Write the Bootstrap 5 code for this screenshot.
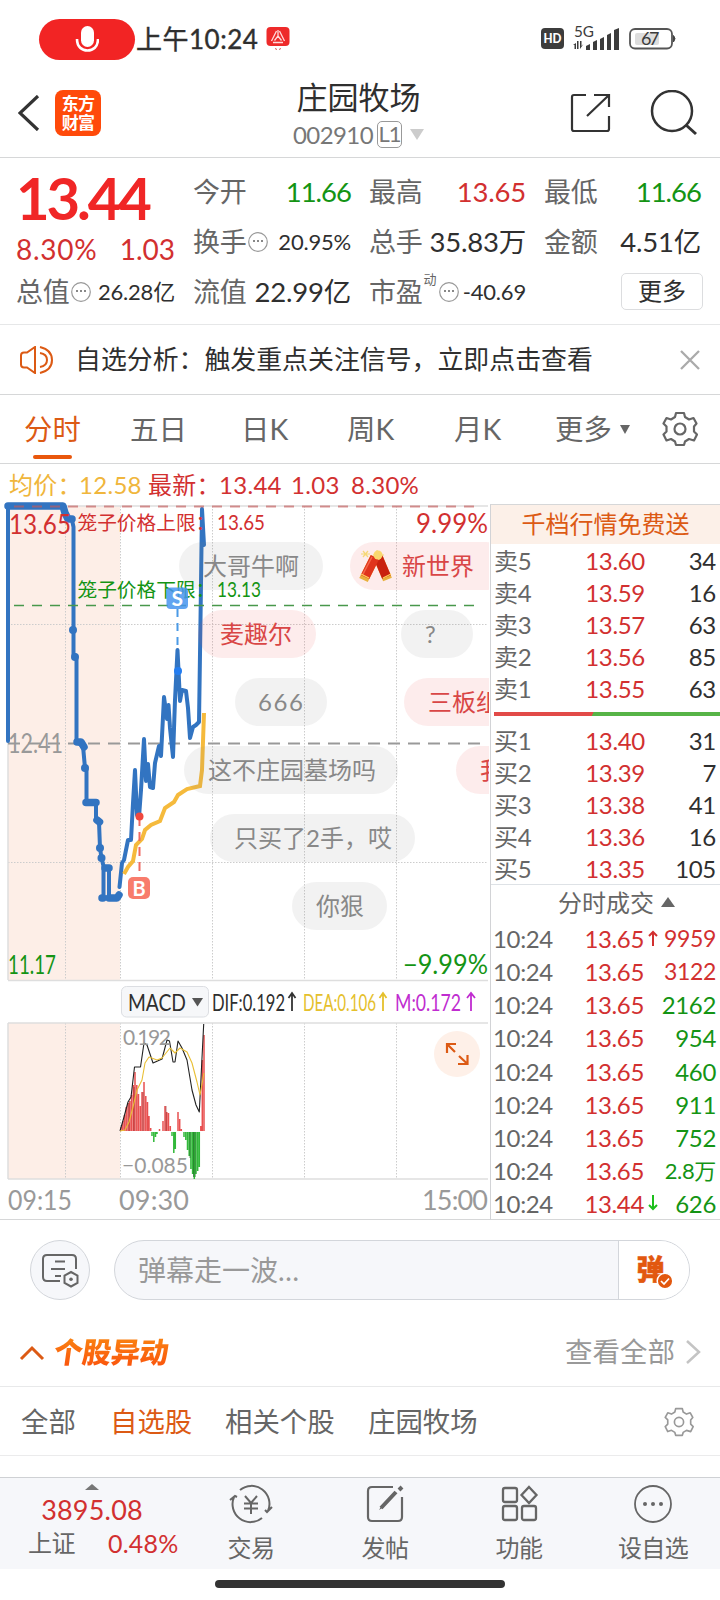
<!DOCTYPE html>
<html lang="zh-CN">
<head>
<meta charset="utf-8">
<meta name="viewport" content="width=device-width, initial-scale=1">
<title>庄园牧场 002910</title>
<link href="https://cdn.jsdelivr.net/npm/bootstrap@5.3.0/dist/css/bootstrap.min.css" rel="stylesheet">
<style>
:root{--up:#d23030;--down:#149414;--ink:#2f2f2f;--dim:#666;--brand:#dc5a14;--rule:#d6d7d8}
body{font-family:Lato,"Noto Sans CJK SC",sans-serif;color:var(--ink);background:#fff;overflow:hidden}
svg{display:block;flex:none}
.screen{width:720px;height:1600px;overflow:hidden}
.up{color:var(--up)}.down{color:var(--down)}.dim{color:var(--dim)}.brand{color:var(--brand)}
.status{height:78px;padding-left:39px}
.mic{width:96px;height:41px;background:#f22424;margin-right:1px}
.clock{font-size:26px;line-height:30px;width:126px;letter-spacing:.5px;-webkit-text-stroke:.4px}
.topbar{height:80px;border-bottom:1px solid var(--rule);padding:0 22px 10px 18px}
.applogo{width:46px;height:46px;border-radius:8px;background:#ff4a0a;color:#fff;font-weight:700;font-size:17px;line-height:19px;letter-spacing:-.8px}
.stockname{font-size:31px;line-height:40px}
.code{font-size:24px;line-height:36px;color:#777;letter-spacing:-.6px}
.lv{width:25px;height:27px;border:1.5px solid #999;border-radius:5px;font-size:22px;line-height:24px;letter-spacing:-1px}
.quote{height:167px;border-bottom:1px solid #e6e7e8;padding:9px 18px 0 16px;display:grid;grid-template-columns:159px 158px 157px 157px;grid-template-rows:50px 50px 50px;column-gap:18px;line-height:50px}
.quote .k{font-size:27px;color:var(--dim);letter-spacing:-.2px}
.quote .v{font-size:27.5px;letter-spacing:-.2px}
.quote .v.tight{letter-spacing:-1px}
.quote .s{font-size:22px;letter-spacing:-.2px}
.quote .chg{font-size:28px;letter-spacing:.7px;padding-top:7px}
.bigprice{font-size:58px;font-weight:700;color:#f02626;line-height:62px;letter-spacing:-3.1px}
.morebtn{width:82px;height:37px;border:1.5px solid #dcdddf;border-radius:5px;font-size:24px;line-height:34px;padding:0;color:var(--ink)}
.notice{height:70px;border-bottom:1px solid var(--rule);padding:0 20px;font-size:25.9px}
.period{height:69px;border-bottom:1px solid var(--rule);font-size:28.4px;color:var(--dim)}
.period>span,.period>div{line-height:67px}
.period .on{position:relative;color:var(--brand)}
.period .on::after{content:"";position:absolute;left:9px;bottom:4px;width:39px;height:4px;border-radius:2px;background:#e9570c}
.legend{height:40px;font-size:24px;line-height:42px;padding-left:9px;letter-spacing:.3px}
.book{width:230px;height:716px;border-left:1px solid #d2d3d6;border-top:1px solid #d6d7d8;font-size:24px}
.ad{height:39px;line-height:37px;background:#fcf0e8;font-size:24px}
.lvl{display:grid;grid-template-columns:87px 64px 71px;height:32px;line-height:32px;padding-left:3px;letter-spacing:-.3px}
.lvl>:nth-child(n+2){text-align:right}
.tick{display:grid;grid-template-columns:90px 67px 66px;height:33.15px;line-height:31.5px;padding-left:2px;letter-spacing:-.35px}
.tick>:nth-child(n+2){text-align:right}
.tick>:nth-child(2){padding-right:8px;margin-right:-2px}
.tick .arr{position:absolute;right:-6px;top:7px}
.ratio{height:4px;margin:7px 4px 9px 3px;background:linear-gradient(115deg,#e24a48 43%,#57b447 43.3%)}
.chartwrap{height:716px;border-bottom:1px solid var(--rule)}
.danmu{height:101px;padding:20px 30px 20px}
.roundbtn{width:60px;height:60px;border:1px solid #d3d6db;background:#f6f7fa}
.sendbox{width:576px;height:60px;border:1px solid #d3d6db;border-radius:30px;background:#f6f7fa;overflow:hidden;margin-left:24px}
.sendbox .ph{width:504px;font-size:28px;line-height:58px;padding-left:23px;color:#999}
.sendbox .dm{width:71px;background:#fff;border-left:1px solid #d3d6db}
.moves{height:66px;padding:0 19px 4px;border-bottom:1px solid #e8e9ea}
.movetitle{font-size:29px;font-weight:900;letter-spacing:-.4px;line-height:40px;transform:skewX(-8deg);background:linear-gradient(#f98a12,#fb4d0c);-webkit-background-clip:text;color:transparent}
.filters{height:69px;border-bottom:1px solid #ebebec;font-size:27.4px;line-height:68px;padding:1px 26px 0 21px}
.dock{height:92px;background:#f6f7fa;border-top:1px solid #cfd1d4;margin-top:21px;color:var(--dim);font-size:24px}
.dock .cell{width:134px;padding-top:6px}
.dock .cell div{line-height:40px;margin-top:4px;letter-spacing:-.6px}
.homebar{width:290px;height:8px;border-radius:4px;background:#333;margin:11px auto 0}
</style>
</head>
<body>
<div class="screen">
<header class="status d-flex align-items-center">
  <div class="mic rounded-pill d-flex align-items-center justify-content-center"><svg width="24" height="27" viewBox="0 0 24 27"><rect x="6" y="0" width="13" height="21" rx="6.5" fill="#fff"/><path d="M2 13C2 21 7 24.500 12.500 24.500S23 21 23 13" fill="none" stroke="#fff" stroke-width="2.600"/></svg></div>
  <div class="clock text-nowrap">上午10:24</div>
  <svg class="ms-1" width="24" height="24" viewBox="0 0 23 24"><rect width="23" height="19" rx="4" fill="#ee2a2a"/><path d="M10 4 5 14M13 4l5 10M6.500 15.500h10M11.500 3v6L8 13.500M11.500 9l3.500 4.500" fill="none" stroke="#ffd9d9" stroke-width="1.300"/><path d="M9 21l1 2M14 21l-1 2" stroke="#d55"/></svg>
  <svg style="margin-left:250px" width="138" height="30" viewBox="540 24 138 30" fill="#3c3c3c">
    <rect x="541" y="28" width="23" height="21" rx="4"/><text x="543.500" y="43" font-size="12.500" font-weight="900" fill="#fff" textLength="18" lengthAdjust="spacingAndGlyphs">HD</text>
    <text x="574" y="37" font-size="16" textLength="20" lengthAdjust="spacingAndGlyphs">5G</text>
    <path d="M573 45l3-2v6h-1.500v-4ZM577 41h1.500v8h-1.500ZM580 41h1.500v5l2-2-3.500 5Z"/>
    <path d="M586 46l4-2v6h-4ZM593 42l4-2v10h-4ZM600 39l4-2v13h-4ZM607 35l4-2v17h-4ZM614 30l5-2v22h-5Z"/>
    <rect x="630" y="29" width="42" height="19.500" rx="5" fill="none" stroke="#555" stroke-width="1.800"/><rect x="635" y="33" width="24" height="12" rx="2" fill="#ddd"/><path d="M673.500 35.500q3 3 0 6.500Z" stroke="#444"/>
    <text x="641" y="45" font-size="18" textLength="18.500">67</text>
  </svg>
</header>

<nav class="topbar d-flex align-items-center">
  <svg width="37" height="36" viewBox="18 95 37 36"><path d="M38 96 20 113 38 130" fill="none" stroke="#333" stroke-width="3.200"/></svg>
  <div class="applogo d-flex flex-column justify-content-center text-center"><span>东方</span><span>财富</span></div>
  <div class="flex-grow-1 text-center" style="margin-top:4px;margin-left:49px">
    <div class="stockname">庄园牧场</div>
    <div class="code d-flex align-items-center justify-content-center"><span>002910</span><span class="lv ms-1">L1</span><svg class="ms-2" width="14" height="11"><path d="M0 0h14L7 11Z" fill="#ccc"/></svg></div>
  </div>
  <svg width="131" height="46" viewBox="568 90 131 46" fill="none" stroke="#333" stroke-width="2.200"><path d="M587 95H575q-2 0-2 2v32q0 2 2 2h33q2 0 2-2V116M595 95h15v12M610 95 588 116"/><circle cx="673" cy="111" r="20" stroke-width="2.500"/><path d="m687 125 10 9" stroke-width="3"/></svg>
</nav>

<section class="quote text-nowrap">
  <div class="bigprice">13.44</div>
  <div class="d-flex justify-content-between"><span class="k">今开</span><span class="v tight down">11.66</span></div>
  <div class="d-flex justify-content-between"><span class="k">最高</span><span class="v up">13.65</span></div>
  <div class="d-flex justify-content-between"><span class="k">最低</span><span class="v tight down">11.66</span></div>
  <div class="d-flex justify-content-between up chg"><span>8.30%</span><span style="letter-spacing:0">1.03</span></div>
  <div class="d-flex align-items-center"><span class="k">换手</span><svg width="22" height="22" viewBox="-11 -11 22 22"><circle r="9.300" fill="none" stroke="#999" stroke-width="1.200"/><path d="M-5-1h2m2 0h2m2 0h2" stroke="#888" stroke-width="2"/></svg><span class="s ms-auto">20.95%</span></div>
  <div class="d-flex justify-content-between"><span class="k">总手</span><span class="v">35.83万</span></div>
  <div class="d-flex justify-content-between"><span class="k">金额</span><span class="v">4.51亿</span></div>
  <div class="d-flex align-items-center"><span class="k">总值</span><svg width="22" height="22" viewBox="-11 -11 22 22"><circle r="9.300" fill="none" stroke="#999" stroke-width="1.200"/><path d="M-5-1h2m2 0h2m2 0h2" stroke="#888" stroke-width="2"/></svg><span class="s ms-auto">26.28亿</span></div>
  <div class="d-flex justify-content-between"><span class="k">流值</span><span class="v">22.99亿</span></div>
  <div class="d-flex align-items-center"><span class="k">市盈</span><span class="dim" style="font-size:13px;line-height:13px;margin:-26px 1px 0">动</span><svg width="22" height="22" viewBox="-11 -11 22 22"><circle r="9.300" fill="none" stroke="#999" stroke-width="1.200"/><path d="M-5-1h2m2 0h2m2 0h2" stroke="#888" stroke-width="2"/></svg><span class="s ms-auto">-40.69</span></div>
  <div class="d-flex align-items-center justify-content-end"><button class="btn morebtn" style="margin-right:-2px;margin-top:-2px">更多</button></div>
</section>

<section class="notice d-flex align-items-center text-nowrap">
  <svg width="33" height="28" viewBox="0 0 33 28" fill="none" stroke="#dc5a14" stroke-width="2"><path d="M15 1v26L7 21.500H4q-3 0-3-3v-9q0-3 3-3h3ZM20 1q12 3 12 13T20 27M20 7q7 1 7 7t-7 7"/></svg>
  <span style="margin-left:22px;width:560px">自选分析：触发重点关注信号，立即点击查看</span>
  <svg class="ms-auto" width="20" height="20"><path d="m1 1 18 18M19 1 1 19" stroke="#aaa" stroke-width="2.300"/></svg>
</section>

<nav class="period d-flex align-items-center text-nowrap">
  <span class="on" style="margin-left:24px;width:106px">分时</span><span style="width:111px">五日</span><span style="width:106px">日K</span><span style="width:107px">周K</span><span style="width:101px">月K</span><span>更多</span>
  <svg style="margin-left:8px" width="10" height="9"><path d="M0 0h10L5 9Z" fill="#666"/></svg>
  <svg style="margin-left:32px" width="36" height="36" viewBox="-18 -18 36 36" fill="none" stroke="#666" stroke-width="2.200"><path id="gear" d="M-4-16h8l1 4 4 2.500 4.500-1.500 3 5.500L14-2.500v5L17 5.500l-3 6L9 10 5 12.500 4 16h-8l-1-3.500L-9 10l-4.500 1.500-3-6 3-3v-5l-3-3 3-5.500L-9-9.500l4-2.500Z" stroke-linejoin="round"/><circle r="5.500"/></svg>
</nav>

<div class="legend d-flex text-nowrap"><span style="color:#f0b63c;width:70px">均价：</span><span style="color:#f0b63c;width:69px">12.58</span><span class="up" style="width:71px">最新：</span><span class="up" style="width:72px">13.44</span><span class="up" style="width:60px">1.03</span><span class="up">8.30%</span></div>

<main class="d-flex chartwrap">
<svg class="overflow-visible" width="490" height="715" viewBox="0 504 490 715" font-size="24">
  <defs><clipPath id="plot"><path d="M0 504H489V981H0Z"/></clipPath></defs>
  <path d="M8 506H120V980H8ZM8 1023H120V1179H8Z" fill="#fdeee7"/>
  <g fill="none" stroke="#ccc" stroke-dasharray="1.500 1.500"><path d="M65.500 506V980M120.500 506V980M212.500 506V980M304.500 506V980M396.500 506V980M8 624.500H488M8 862.500H488M65.500 1023V1179M120.500 1023V1179M212.500 1023V1179M304.500 1023V1179M396.500 1023V1179"/></g>
  <path d="M8 506H488M8 980.500H488M8 1179H488M8 506V980M8 1023V1179M8 1023H488" fill="none" stroke="#dedede" stroke-width="1.500"/>
  <path d="M8 743.500H488" stroke="#999" stroke-width="1.800" stroke-dasharray="12 8"/>
  <g fill="none" stroke="#3274c1" stroke-linejoin="round" stroke-linecap="round">
    <path d="M8 508V741" stroke-width="4"/><path d="M8 506H63L65 513 68 519H72" stroke-width="7.500"/>
    <path d="M72 520 73.500 527V655H75L76.500 660V742L83 746 85 768 86.500 770V802H96V820L99 822 100 848 101.500 858 103.500 866V898M103.500 867H109V898H117L119 895" stroke-width="4"/>
    <path d="M77 742H81L84 747M86 802.500H96M97 820 99.500 822M102 898H103M105 868H109M109 898H117L119 895" stroke-width="7.500"/>
    <path d="M119.500 887 122 863 124 860 128 840H131L133 803 135 770 137 815 139 817 141 790 144 739 146 781 148 764 150 787 153 788 155 763 159 746 161 756 164 697 167 719 168.500 705 170 728 173 757 175 700 177.500 650 180 701 182 690 186 691 188 708 190 738 193 727 196 725 199 722 200.500 620 202 509 204 545" stroke-width="4"/>
  </g>
  <g fill="#3274c1"><circle cx="73" cy="630" r="4"/><circle cx="75" cy="657" r="4"/><circle cx="85" cy="768" r="4"/><circle cx="100" cy="848" r="4"/><circle cx="101.500" cy="858" r="4"/></g>
  <path d="M124 874 128 867 133 861 136 845 142 839 145 830 151 825 160 821 165 808 174 802 178 795 187 789 200 786 202 770 204 713" fill="none" stroke="#f5ba3c" stroke-width="4"/>
  <path d="M14 506.500H476" stroke="#c45a5a" stroke-opacity=".65" stroke-width="2" stroke-dasharray="10 8"/>
  <path d="M14 605.500H476" stroke="#48984b" stroke-width="1.600" stroke-dasharray="10 8"/>
  <g clip-path="url(#plot)">
  <g fill="#808080" fill-opacity=".1"><rect x="179" y="542" width="144" height="48" rx="24"/><rect x="401" y="610" width="72" height="48" rx="24"/><rect x="235" y="678" width="92" height="48" rx="24"/><rect x="184" y="746" width="214" height="48" rx="24"/><rect x="210" y="814" width="205" height="48" rx="24"/><rect x="292" y="882" width="95" height="48" rx="24"/></g>
  <g fill="#f04040" fill-opacity=".1"><rect x="350" y="542" width="160" height="48" rx="24"/><rect x="198" y="610" width="118" height="48" rx="24"/><rect x="404" y="678" width="120" height="48" rx="24"/><rect x="456" y="746" width="90" height="48" rx="24"/></g>
  <g fill="#888"><text x="203" y="574.500">大哥牛啊</text><text x="425" y="643">?</text><text x="258" y="711" textLength="45">666</text><text x="208" y="778.500">这不庄园墓场吗</text><text x="234" y="846.500" textLength="158">只买了2手，哎</text><text x="316" y="914.500">你狠</text></g>
  <g fill="#d94646"><text x="402" y="574.500">新世界</text><text x="220" y="642.500">麦趣尔</text><text x="428" y="710.500">三板组</text><text x="480" y="778.500">我</text></g>
  </g>
  <g fill="none"><path d="M378 557 387.500 579.500" stroke="#e8b13c" stroke-width="9.500"/><path d="M375 557 363.500 580" stroke="#e8b13c" stroke-width="9.500"/><path d="M378 557 386.500 577" stroke="#c9220f" stroke-width="9.500"/><path d="M375 557 365 577" stroke="#e0341c" stroke-width="9.500"/><path d="M372 557 362.500 575" stroke="#f4684a" stroke-width="1.500"/><path d="M361 574 369 578M383 578 391 574" stroke="#ffd05b" stroke-width="1.300"/><circle cx="378" cy="555" r="4.500" fill="#fbd96b"/><path d="m377 550 2 10M373 555h11M363 551l5 6M361 554h9M368 551l-5 6" stroke="#f6d877" stroke-width="1.200"/></g>
  <g class="up" fill="currentColor"><text x="9" y="533.500" font-size="27" textLength="62" lengthAdjust="spacingAndGlyphs">13.65</text><text x="77.500" y="530" font-size="19.700">笼子价格上限：</text><text x="217" y="530" font-size="21" textLength="48" lengthAdjust="spacingAndGlyphs">13.65</text><text x="416" y="533" font-size="27" textLength="72" lengthAdjust="spacingAndGlyphs">9.99%</text></g>
  <g class="down" fill="currentColor"><text x="77.500" y="597" font-size="19.700">笼子价格下限：</text><text x="217" y="597" font-size="21" textLength="44" lengthAdjust="spacingAndGlyphs">13.13</text><text x="8" y="974" font-size="26.500" textLength="48" lengthAdjust="spacingAndGlyphs">11.17</text><text x="403" y="974" font-size="27" textLength="85" lengthAdjust="spacingAndGlyphs">−9.99%</text></g>
  <text x="8" y="753" font-size="27" fill="#999" textLength="55" lengthAdjust="spacingAndGlyphs">12.41</text>
  <path d="M177.500 609V650" stroke="#4b9ae6" stroke-width="2" stroke-dasharray="8 6"/><circle cx="178" cy="671" r="4" fill="#247df0"/><rect x="166.500" y="587.500" width="21.500" height="21.500" rx="4" fill="#4694ee" fill-opacity=".85"/><text x="177.300" y="605.500" font-size="21" font-weight="700" fill="#fff" text-anchor="middle">S</text>
  <path d="M139.500 817V877" stroke="#ef6b62" stroke-width="2" stroke-dasharray="9 6"/><circle cx="139.500" cy="816.500" r="4" fill="#f0483e"/><rect x="128" y="877" width="22" height="22" rx="5" fill="#f87c6c"/><text x="139" y="895.500" font-size="20" font-weight="700" fill="#fff" text-anchor="middle">B</text>

  <rect x="121.500" y="986.500" width="87" height="30.500" rx="5" fill="#f6f7f9" stroke="#dcdee2"/>
  <text x="128" y="1011" textLength="58" lengthAdjust="spacingAndGlyphs" fill="#2f2f2f">MACD</text><path d="M192 998h11l-5.500 8.500Z" fill="#555"/>
  <text x="212" y="1011" textLength="73" lengthAdjust="spacingAndGlyphs" fill="#2f2f2f">DIF:0.192</text><text x="303" y="1011" textLength="73" lengthAdjust="spacingAndGlyphs" fill="#e5c02c">DEA:0.106</text><text x="395" y="1011" textLength="66" lengthAdjust="spacingAndGlyphs" fill="#c02cd0">M:0.172</text>
  <g fill="none" stroke-width="1.800"><path d="M292 1011V993M288.500 998 292 993 295.500 998" stroke="#333"/><path d="M383 1011V993M379.500 998 383 993 386.500 998" stroke="#e5c02c"/><path d="M471 1011V993M467 998 471 993 475 998" stroke="#c02cd0"/></g>
  <g stroke-width="1.500"><path d="M121 1131V1127M122.800 1131V1121M124.500 1131V1115M126.200 1131V1107M128 1131V1103M129.800 1131V1101M131.500 1131V1095M133.300 1131V1085M135 1131V1072M136.800 1131V1085M138.500 1131V1094M140.300 1131V1106M142 1131V1092M144 1131V1082M145.800 1131V1096M147.500 1131V1102M149 1131V1116M150.700 1131V1128M159.500 1131V1129M163 1131V1121M165 1131V1106M166.800 1131V1112M168.500 1131V1113M170.300 1131V1126M178 1131V1112M179.700 1131V1119M181.300 1131V1129M200.800 1131V1126M202.300 1131V1060M204 1131V1035" stroke="#e85050"/><path d="M152 1132V1136M153.800 1132V1142M155.500 1132V1137M157 1132V1134M172 1132V1136M173.800 1132V1153M175.300 1132V1149M184 1132V1137M185.800 1132V1140M187.500 1132V1150M189.200 1132V1156M190.900 1132V1169M192.600 1132V1174M194.300 1132V1179M196 1132V1174M197.700 1132V1171M199.300 1132V1167" stroke="#32b83a"/></g>
  <g stroke-width=".6"><path d="M128.900 1131V1103M134.100 1131V1087M143 1131V1092M166 1131V1106" stroke="#8f1717"/><path d="M190 1132V1158M193.500 1132V1177M195.200 1132V1177" stroke="#0b5c12"/></g>
  <g fill="none" stroke-width="1.100" stroke-linejoin="round"><path d="M120 1131 124 1117 128 1102 131 1097 134.500 1067 140.500 1067 144 1043 147 1045 153 1063 162 1059 167 1040 169.500 1041 173 1062 175 1062 178 1041 182 1048 187 1060 192 1090 196 1105 199.300 1112 203.700 1024" stroke="#222"/><path d="M120 1131 125 1130 129 1122 133 1107 137 1090 142 1080 145 1063 149 1057 157 1060 162 1058 170 1048 175 1053 180 1048 187 1052 192 1063 197 1082 200 1095 204 1073" stroke="#e9bf34"/></g>
  <g fill="#999"><text x="123" y="1045" font-size="21" textLength="48">0.192</text><text x="122" y="1173" font-size="21" textLength="66">−0.085</text><text x="8" y="1210" font-size="27" textLength="64" lengthAdjust="spacingAndGlyphs">09:15</text><text x="119" y="1210" font-size="27" textLength="70">09:30</text><text x="422" y="1210" font-size="27" textLength="66">15:00</text></g>
  <circle cx="457" cy="1054" r="23" fill="#fef0e8"/><path d="M447 1053V1044H456M447.500 1044.500 455 1052M467.500 1055V1064H458M467 1063.500 459 1056" fill="none" stroke="#dc5a14" stroke-width="2.200"/>
</svg>
<aside class="book flex-shrink-0">
  <div class="ad text-center brand">千档行情免费送</div>
  <div style="padding-top:1px">
  <div class="lvl"><span class="dim">卖5</span><span class="up">13.60</span><span>34</span></div>
  <div class="lvl"><span class="dim">卖4</span><span class="up">13.59</span><span>16</span></div>
  <div class="lvl"><span class="dim">卖3</span><span class="up">13.57</span><span>63</span></div>
  <div class="lvl"><span class="dim">卖2</span><span class="up">13.56</span><span>85</span></div>
  <div class="lvl"><span class="dim">卖1</span><span class="up">13.55</span><span>63</span></div>
  </div>
  <div class="ratio"></div>
  <div class="lvl"><span class="dim">买1</span><span class="up">13.40</span><span>31</span></div>
  <div class="lvl"><span class="dim">买2</span><span class="up">13.39</span><span>7</span></div>
  <div class="lvl"><span class="dim">买3</span><span class="up">13.38</span><span>41</span></div>
  <div class="lvl"><span class="dim">买4</span><span class="up">13.36</span><span>16</span></div>
  <div class="lvl" style="height:31px"><span class="dim">买5</span><span class="up">13.35</span><span>105</span></div>
  <div class="d-flex align-items-center justify-content-center dim border-top" style="height:38px;line-height:35px;margin-bottom:1px;padding:0 0 3px 22px"><span>分时成交</span><svg style="margin-left:7px" width="14" height="10"><path d="M0 10h14L7 0Z" fill="#666"/></svg></div>
  <div class="tick"><span class="dim">10:24</span><span class="up position-relative">13.65<svg class="arr" width="10" height="16" fill="none" stroke="#d23030" stroke-width="2"><path d="M5 16V2M1 6l4-4 4 4"/></svg></span><span class="up" style="font-size:23px">9959</span></div>
  <div class="tick"><span class="dim">10:24</span><span class="up">13.65</span><span class="up" style="font-size:23px">3122</span></div>
  <div class="tick"><span class="dim">10:24</span><span class="up">13.65</span><span class="down">2162</span></div>
  <div class="tick"><span class="dim">10:24</span><span class="up">13.65</span><span class="down">954</span></div>
  <div class="tick"><span class="dim">10:24</span><span class="up">13.65</span><span class="down">460</span></div>
  <div class="tick"><span class="dim">10:24</span><span class="up">13.65</span><span class="down">911</span></div>
  <div class="tick"><span class="dim">10:24</span><span class="up">13.65</span><span class="down">752</span></div>
  <div class="tick"><span class="dim">10:24</span><span class="up">13.65</span><span class="down" style="font-size:22px">2.8万</span></div>
  <div class="tick"><span class="dim">10:24</span><span class="up position-relative">13.44<svg class="arr" width="10" height="16" fill="none" stroke="#1cbf1c" stroke-width="2"><path d="M5 0V14M1 10l4 4 4-4"/></svg></span><span class="down">626</span></div>
</aside>
</main>

<section class="danmu d-flex">
  <div class="roundbtn rounded-circle d-flex align-items-center justify-content-center"><svg width="38" height="36" viewBox="0 0 38 36" fill="none" stroke="#666" stroke-width="2"><path d="M19 29H6q-4 0-4-4V7q0-4 4-4H31q4 0 4 4V17M14 9.500H24M10 17H24M14 24H20"/><path d="m30 20 6.500 3.500v7.500L30 34.500 23.500 31v-7.500Z"/><circle cx="30" cy="27.300" r="1.800" fill="#666" stroke="none"/></svg></div>
  <div class="sendbox d-flex flex-shrink-0"><span class="ph">弹幕走一波…</span><span class="dm d-flex align-items-center"><svg width="60" height="44" viewBox="619 1248 60 44"><text x="636.500" y="1280" font-size="28" font-weight="900" fill="#e2580f" stroke="#e2580f" stroke-width=".5">弹</text><circle cx="665" cy="1281" r="7.800" fill="#e2580f" stroke="#fff" stroke-width="1.500"/><path d="m661 1281 3 3 5-5.500" fill="none" stroke="#fff" stroke-width="1.700"/></svg></span></div>
</section>

<section class="moves d-flex align-items-center text-nowrap">
  <svg width="26" height="18"><path d="M2 16 13 5 24 16" fill="none" stroke="#dc5a14" stroke-width="3"/></svg>
  <span class="movetitle" style="margin-left:9px">个股异动</span>
  <span class="ms-auto" style="font-size:27.500px;color:#999">查看全部</span>
  <svg style="margin-left:11px" width="15" height="24"><path d="M1 1 13 12 1 23" fill="none" stroke="#c4c4c4" stroke-width="2.500"/></svg>
</section>

<nav class="filters d-flex align-items-center dim text-nowrap">
  <span style="width:89px">全部</span><span class="brand" style="width:115px">自选股</span><span style="width:143px">相关个股</span><span>庄园牧场</span>
  <svg class="ms-auto" width="30" height="30" viewBox="-18 -18 36 36" fill="none" stroke="#999" stroke-width="2"><use href="#gear"/><circle r="5.500"/></svg>
</nav>

<footer class="dock d-flex text-center text-nowrap">
  <div style="width:184px;padding-top:6px">
    <svg class="mx-auto" width="14" height="6"><path d="M0 6 7 0l7 6Z" fill="#777"/></svg>
    <div class="up" style="font-size:27px;line-height:36px;margin-top:2px;letter-spacing:.2px">3895.08</div>
    <div class="d-flex" style="line-height:30px;padding-left:28px"><span style="width:80px;text-align:left;letter-spacing:-.5px">上证</span><span class="up" style="font-size:25px;letter-spacing:.2px">0.48%</span></div>
  </div>
  <div class="cell"><svg class="mx-auto" width="44" height="40" viewBox="-22 -20 44 40" fill="none" stroke="#666" stroke-width="2"><path d="M-11-14A18 18 0 0 1 17 7M21 3 16 8 14 6M11 14A18 18 0 0 1-17-7M-21-4-16-8-14-7M-6-8 0-1 6-8M0-1V10M-7-.5H7M-7 4.500H7"/></svg><div>交易</div></div>
  <div class="cell"><svg class="mx-auto" width="40" height="40" viewBox="-20 -20 40 40" fill="none" stroke="#666" stroke-width="2"><path d="M8-17H-13q-4 0-4 4V13q0 4 4 4H13q4 0 4-4V-7" stroke-width="2.200"/><path d="M-4 4 11-12M14-14 17-17" stroke-width="4"/><path d="m-6 6 3-5 2 2Z" fill="#666" stroke="none"/></svg><div>发帖</div></div>
  <div class="cell"><svg class="mx-auto" width="40" height="40" viewBox="-20 -20 40 40" fill="none" stroke="#666" stroke-width="2.300"><rect x="-16" y="-16" width="14" height="14" rx="2"/><rect x="-16" y="2" width="14" height="14" rx="2"/><rect x="3" y="2" width="14" height="14" rx="2"/><path d="M10-17 17.500-9 10-1 2.500-9Z"/></svg><div>功能</div></div>
  <div class="cell"><svg class="mx-auto" width="40" height="40" viewBox="-20 -20 40 40" fill="none" stroke="#666" stroke-width="1.800"><circle r="18"/><g fill="#666" stroke="none"><circle cx="-8" r="2"/><circle r="2"/><circle cx="8" r="2"/></g></svg><div>设自选</div></div>
</footer>
<div class="homebar"></div>
</div>
<script src="https://cdn.jsdelivr.net/npm/bootstrap@5.3.0/dist/js/bootstrap.bundle.min.js"></script>
</body>
</html>
